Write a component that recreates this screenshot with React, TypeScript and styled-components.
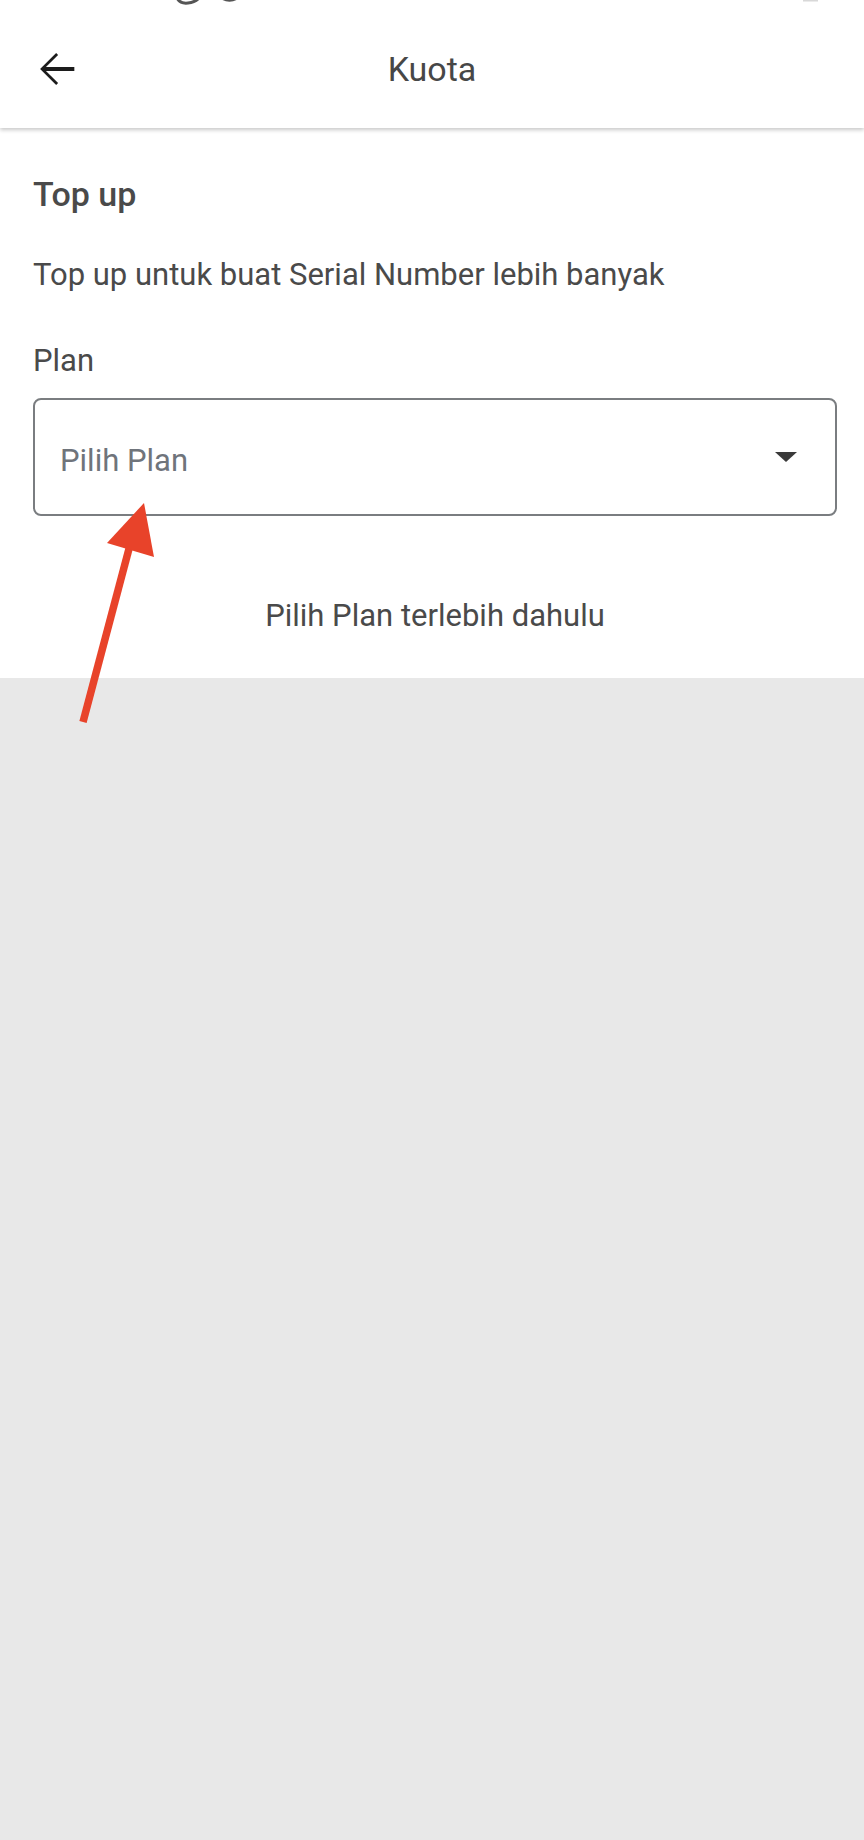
import React from 'react';
import styled, { createGlobalStyle } from 'styled-components';

const GlobalStyle = createGlobalStyle`
  html, body {
    margin: 0;
    padding: 0;
    background: #e8e8e8;
  }
  body {
    font-family: Roboto, "Noto Sans", "Liberation Sans", sans-serif;
  }
`;

const Page = styled.div`
  position: relative;
  width: 864px;
  min-height: 1840px;
  background: #e8e8e8;
`;

const Header = styled.header`
  position: relative;
  z-index: 2;
  height: 128px;
  background: #ffffff;
  box-shadow: 0 2px 4px rgba(0, 0, 0, 0.22);
  display: flex;
  flex-direction: column;
`;

const StatusPeek = styled.div`
  height: 5px;
  overflow: hidden;
  display: flex;
`;

const Toolbar = styled.div`
  flex: 1;
  display: grid;
  grid-template-columns: 1fr auto 1fr;
  align-items: center;
  padding-top: 5px;
`;

const BackButton = styled.button`
  justify-self: start;
  margin-left: 31px;
  width: 52px;
  height: 52px;
  padding: 0;
  border: none;
  background: transparent;
  display: flex;
  align-items: center;
  justify-content: center;
  color: #1c1c1c;
`;

const Title = styled.h1`
  margin: 0;
  font-size: 34px;
  font-weight: 400;
  color: #474747;
  line-height: 1.2;
`;

const Content = styled.section`
  background: #ffffff;
  padding: 46px 27px 44px 33px;
  display: flex;
  flex-direction: column;
`;

const SectionTitle = styled.h2`
  margin: 0;
  font-size: 34px;
  font-weight: 500;
  color: #4a4a4a;
  line-height: 1.2;
`;

const Text = styled.p<{ $gap: number; $center?: boolean }>`
  margin: ${(p) => p.$gap}px 0 0;
  font-size: 31px;
  font-weight: 400;
  color: #4a4a4a;
  line-height: 1.2;
  text-align: ${(p) => (p.$center ? 'center' : 'left')};
`;

const SelectBox = styled.div`
  margin-top: 19px;
  height: 118px;
  box-sizing: border-box;
  border: 2px solid #7a7d80;
  border-radius: 8px;
  display: flex;
  align-items: center;
  justify-content: space-between;
  padding: 6px 38px 0 25px;
`;

const Placeholder = styled.span`
  font-size: 31px;
  color: #6f747b;
  line-height: 1.2;
`;

const Caret = styled.span`
  width: 0;
  height: 0;
  margin-top: -6px;
  border-left: 11px solid transparent;
  border-right: 11px solid transparent;
  border-top: 10px solid #3a3a3a;
`;

const Overlay = styled.svg`
  position: absolute;
  top: 0;
  left: 0;
  z-index: 3;
  pointer-events: none;
`;

export default function App() {
  return (
    <Page>
      <GlobalStyle />
      <Header>
        <StatusPeek>
          <svg width="864" height="5" viewBox="0 0 864 5">
            <path d="M177 -2 Q180 4 188 3 Q196 2 200 -3" fill="none" stroke="#555" strokeWidth="3" />
            <path d="M219 -6 A11 9 0 0 0 240 -6" fill="none" stroke="#555" strokeWidth="3" />
            <rect x="803" y="0" width="15" height="1.5" fill="#d8d8d8" />
          </svg>
        </StatusPeek>
        <Toolbar>
          <BackButton aria-label="Kembali">
            <svg width="52" height="52" viewBox="0 0 24 24" fill="currentColor">
              <path d="M20 11.1H6.9l5.6-5.6L11.6 4.6 4.2 12l7.4 7.4.9-.9-5.6-5.6H20z" />
            </svg>
          </BackButton>
          <Title>Kuota</Title>
          <span />
        </Toolbar>
      </Header>

      <Content>
        <SectionTitle>Top up</SectionTitle>
        <Text $gap={41}>Top up untuk buat Serial Number lebih banyak</Text>
        <Text $gap={49}>Plan</Text>
        <SelectBox>
          <Placeholder>Pilih Plan</Placeholder>
          <Caret />
        </SelectBox>
        <Text $gap={81} $center>
          Pilih Plan terlebih dahulu
        </Text>
      </Content>

      <Overlay width="864" height="760" viewBox="0 0 864 760">
        <line x1="83" y1="722" x2="130" y2="545" stroke="#e8432a" strokeWidth="7.5" />
        <polygon points="144,503 107,543 154,557" fill="#e8432a" />
      </Overlay>
    </Page>
  );
}
